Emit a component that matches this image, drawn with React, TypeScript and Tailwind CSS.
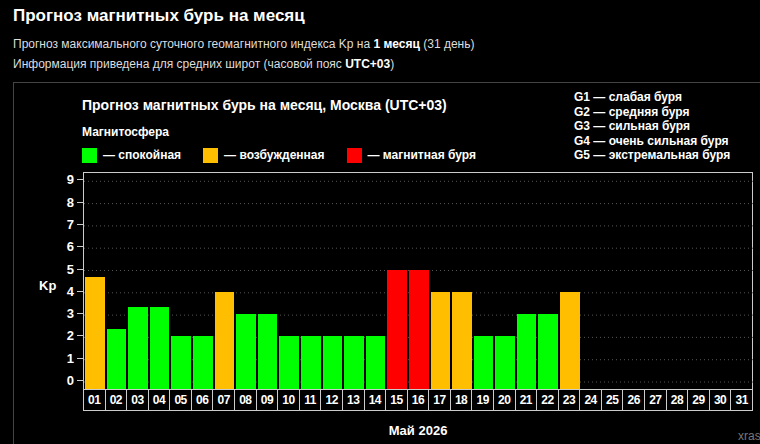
const data: number[] = [4.67,2.33,3.33,3.33,2,2,4,3,3,2,2,2,2,2,5,5,4,4,2,2,3,3,4];
const color = (v: number) => (v >= 5 ? "#ff0000" : v >= 4 ? "#ffbf00" : "#00ff00");
const U = 22.3;

export default function App() {
  const days = Array.from({ length: 31 }, (_, i) => String(i + 1).padStart(2, "0"));
  return (
    <div className="w-[760px] h-[444px] overflow-hidden bg-black text-white" style={{ fontFamily: '"Liberation Sans", Arial, sans-serif' }}>
      <div className="px-[13px] pt-[5px]">
        <div className="text-[17px] font-bold leading-[22px]">Прогноз магнитных бурь на месяц</div>
        <div className="text-[12px] text-[#ddd] mt-[9px] leading-[16px]">Прогноз максимального суточного геомагнитного индекса Kp на <b className="text-white">1 месяц</b> (31 день)</div>
        <div className="text-[12px] text-[#ddd] mt-[4px] leading-[16px]">Информация приведена для средних широт (часовой пояс <b className="text-white">UTC+03</b>)</div>
      </div>
      <div className="ml-[13px] mt-[10px] w-[760px] h-[400px] border border-[#444] relative">
        <div className="flex pl-[68px] pt-[13px] font-bold">
          <div className="w-[492px]">
            <div className="text-[14px] leading-[18px]">Прогноз магнитных бурь на месяц, Москва (UTC+03)</div>
            <div className="text-[12px] leading-[16px] mt-[10px]">Магнитосфера</div>
            <div className="flex items-center text-[12px] mt-[6px] gap-[6px]">
              <span className="w-[15px] h-[15px] bg-[#00ff00]" /><span className="mr-[16px]">— спокойная</span>
              <span className="w-[15px] h-[15px] bg-[#ffbf00]" /><span className="mr-[16px]">— возбужденная</span>
              <span className="w-[15px] h-[15px] bg-[#ff0000]" /><span>— магнитная буря</span>
            </div>
          </div>
          <div className="text-[12px] leading-[14.5px] -mt-[6px]">
            <div>G1 — слабая буря</div>
            <div>G2 — средняя буря</div>
            <div>G3 — сильная буря</div>
            <div>G4 — очень сильная буря</div>
            <div>G5 — экстремальная буря</div>
          </div>
        </div>
        <div className="flex mt-[8px] font-bold">
          <div className="w-[27px] flex items-center text-[13px] pl-[27px] pr-0 h-[217px]"><span className="-ml-[2px] mt-[10px]">Kp</span></div>
          <div className="w-[42px] relative h-[217px]">
            {Array.from({ length: 10 }, (_, k) => (
              <div key={k} className="absolute right-0 flex items-center text-[13px] leading-none" style={{ top: 209 - k * U - 7 }}>
                <span>{k}</span><span className="w-[6px] h-px bg-[#ccc] ml-[3px]" />
              </div>
            ))}
          </div>
          <div>
            <div className="relative w-[670px] h-[217px] border-l border-t border-r border-[#ccc]">
              <svg className="absolute inset-0" width="670" height="217">
                {Array.from({ length: 10 }, (_, k) => (
                  <line key={k} x1="0" x2="670" y1={209 - k * U} y2={209 - k * U} stroke="#555" strokeDasharray="1 3" />
                ))}
              </svg>
              <div className="absolute inset-x-0 bottom-0 flex items-end gap-[2px] pl-[1px]">
                {data.map((v, i) => (
                  <div key={i} className="w-[19.6px]" style={{ height: v * U + 8, background: color(v) }} />
                ))}
              </div>
            </div>
            <div className="flex w-[670px] border-l border-[#ccc]">
              {days.map((d) => (
                <div key={d} className="flex-1 h-[22px] border border-l-0 border-[#ccc] flex items-center justify-center text-[12px] tracking-[-0.5px]">{d}</div>
              ))}
            </div>
            <div className="text-center text-[13px] mt-[10px]">Май 2026</div>
          </div>
        </div>
        <div className="absolute left-[724px] top-[344px] text-[12px] text-[#777]">xras</div>
      </div>
    </div>
  );
}
